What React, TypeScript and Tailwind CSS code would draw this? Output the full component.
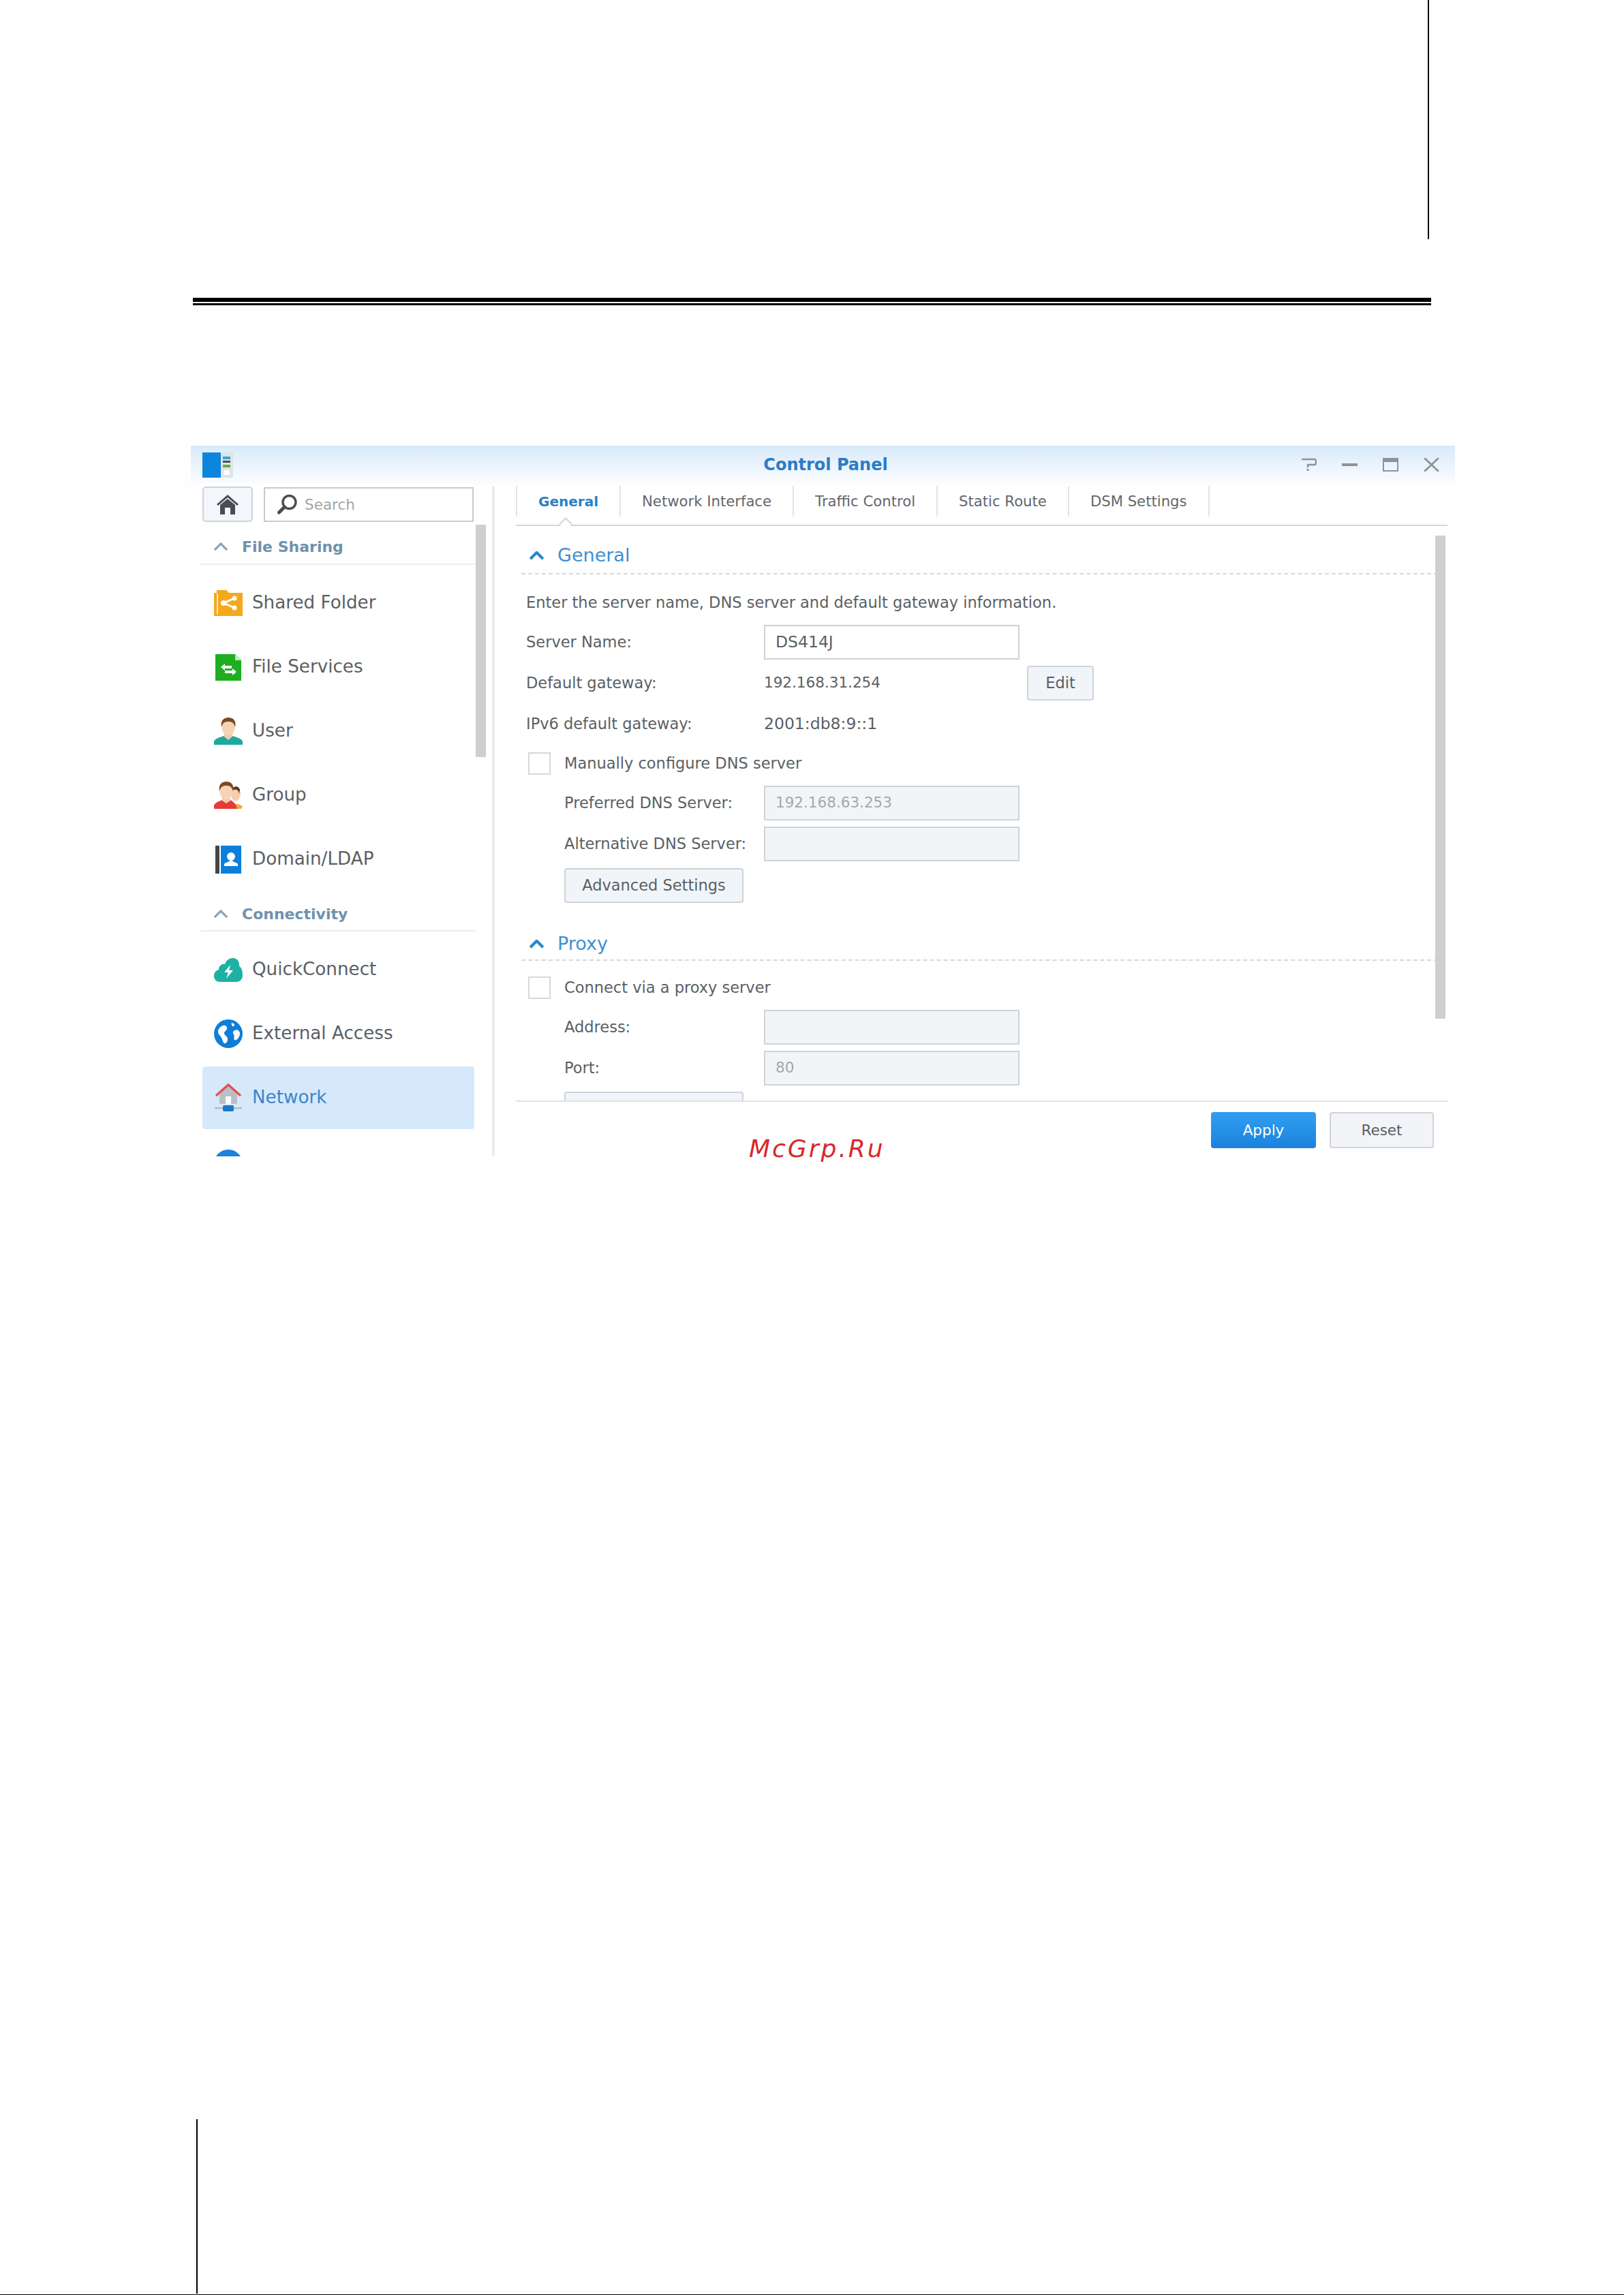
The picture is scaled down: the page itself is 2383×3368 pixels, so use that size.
import React from "react";

const F = "[font-family:'DejaVu_Sans',Verdana,sans-serif]";

function Chevron({ className = "", w = 3.4 }: { className?: string; w?: number }) {
  return (
    <svg viewBox="0 0 24 14" className={className} fill="none" stroke="currentColor" strokeWidth={w}>
      <path d="M2 12 L12 2 L22 12" />
    </svg>
  );
}

function FolderIcon() {
  return (
    <svg viewBox="0 0 42 38" className="w-[42px] h-[38px]">
      <path d="M0 4 H4 V0 H18 L22 4 H42 V38 H0 Z" fill="#f6a81c" />
      <rect x="4" y="5" width="2" height="30" fill="#fff" opacity="0.7" />
      <path d="M14 19 L30 12 M14 19 L30 26" stroke="#fff" strokeWidth="3" />
      <circle cx="14" cy="19" r="4" fill="#fff" />
      <circle cx="30" cy="12" r="3.5" fill="#fff" />
      <circle cx="30" cy="26" r="3.5" fill="#fff" />
    </svg>
  );
}
function FileIcon() {
  return (
    <svg viewBox="0 0 38 39" className="w-[38px] h-[39px]">
      <path d="M0 0 H29 L38 9 V39 H0 Z" fill="#1fae1f" />
      <path d="M29 0 V9 H38 Z" fill="#bfe8bf" />
      <path d="M8 19 L14 14 V17 H24 V21 H14 V24 Z" fill="#fff" />
      <path d="M31 26 L25 21 V24 H14 V28 H25 V31 Z" fill="#fff" />
    </svg>
  );
}
function UserIcon() {
  return (
    <svg viewBox="0 0 42 40" className="w-[42px] h-[40px]">
      <path d="M0 40 V35 C2 30 10 29 14 27 L21 32 L28 27 C32 29 40 30 42 35 V40 Z" fill="#1fa8a0" />
      <path d="M15 22 H27 V28 L21 33 L15 28 Z" fill="#f3cba8" />
      <ellipse cx="21" cy="13" rx="10" ry="13" fill="#f6d3b4" />
      <path d="M11 14 C9 3 16 0 21 0 C27 0 33 3 31 14 C29 8 27 6 21 6 C15 6 13 8 11 14 Z" fill="#7a4a2a" />
    </svg>
  );
}
function GroupIcon() {
  return (
    <svg viewBox="0 0 42 40" className="w-[42px] h-[40px]">
      <path d="M22 38 C26 30 34 32 42 36 L40 40 H22 Z" fill="#f0a83c" />
      <ellipse cx="32" cy="18" rx="7" ry="11" fill="#f3cfae" />
      <path d="M26 14 C26 7 36 4 38 12 L37 18 C36 12 33 11 29 12 Z" fill="#5a3a22" />
      <path d="M0 40 V35 C2 30 8 29 12 27 L18 31 L24 27 C28 29 32 32 34 40 Z" fill="#e63a3a" />
      <path d="M12 20 H24 V28 L18 32 L12 28 Z" fill="#f3cba8" />
      <ellipse cx="18" cy="13" rx="10" ry="13" fill="#f6d3b4" />
      <path d="M8 14 C6 3 13 0 18 0 C24 0 30 3 28 14 C26 8 24 6 18 6 C12 6 10 8 8 14 Z" fill="#7a4a2a" />
    </svg>
  );
}
function DomainIcon() {
  return (
    <svg viewBox="0 0 38 41" className="w-[38px] h-[41px]">
      <rect x="0" y="0" width="6" height="41" fill="#444" />
      <rect x="8" y="0" width="30" height="41" fill="#0b7fdc" />
      <circle cx="23" cy="16" r="6" fill="#fff" />
      <path d="M13 30 V27 C15 24 19 25 21 22 H25 C27 25 31 24 33 27 V30 Z" fill="#fff" />
    </svg>
  );
}
function CloudIcon() {
  return (
    <svg viewBox="0 0 42 35" className="w-[42px] h-[35px]">
      <path d="M9 35 C2 35 0 30 0 26 C0 21 3 18 7 17 C7 11 12 8 16 9 C18 2 24 0 28 0 C34 0 38 5 37 12 C41 14 42 20 42 25 C42 31 38 35 33 35 Z" fill="#1fb0a4" />
      <path d="M24 10 L15 21 H21 L18 30 L28 18 H22 Z" fill="#fff" />
    </svg>
  );
}
function GlobeIcon() {
  return (
    <svg viewBox="0 0 42 42" className="w-[42px] h-[42px]">
      <circle cx="21" cy="21" r="21" fill="#0f7ed8" />
      <path d="M7 14 C12 7 18 8 19 12 C20 16 15 17 15 20 C15 24 20 24 20 29 C20 34 16 37 14 34 C12 31 12 27 9 24 C6 21 5 17 7 14 Z" fill="#fff" />
      <path d="M26 5 C30 6 31 8 29 10 C27 11 25 8 26 5 Z" fill="#fff" />
      <path d="M29 17 C33 14 38 16 38 21 C38 26 33 32 30 30 C28 27 31 25 29 22 C28 20 27 19 29 17 Z" fill="#fff" />
    </svg>
  );
}
function NetIcon() {
  return (
    <svg viewBox="0 0 42 42" className="w-[42px] h-[42px]">
      <path d="M8 16 L21 4 L34 16 V30 H8 Z" fill="#b9bfc7" />
      <rect x="17" y="19" width="8" height="11" fill="#fff" />
      <path d="M3 18 L21 2 L39 18" fill="none" stroke="#e8504e" strokeWidth="3.5" />
      <rect x="1" y="35" width="40" height="2.5" fill="#b4bac2" />
      <rect x="13" y="32" width="16" height="9" rx="2" fill="#1e78c8" />
    </svg>
  );
}
function AppIcon() {
  return (
    <svg viewBox="0 0 45 37" className="w-[45px] h-[37px]">
      <rect x="0" y="0" width="27" height="37" fill="#0c85dc" />
      <rect x="27" y="0" width="18" height="37" fill="#dfe4e8" />
      <rect x="30" y="6" width="11" height="4" fill="#3aa0c8" />
      <rect x="30" y="12" width="11" height="3" fill="#444f58" />
      <rect x="30" y="18" width="11" height="4" fill="#6ab02c" />
      <rect x="31" y="26" width="9" height="7" rx="2" fill="#fff" />
    </svg>
  );
}

function Item({ icon, label }: { icon: React.ReactNode; label: string }) {
  return (
    <div className="flex items-center h-[94px] shrink-0 w-[399px]">
      <div className="w-[73px] pl-[17px] flex justify-start shrink-0">{icon}</div>
      <span className="text-[26.2px] text-[#5b5f63] whitespace-nowrap">{label}</span>
    </div>
  );
}

function Heading({ label, h }: { label: string; h: string }) {
  return (
    <div className={`flex items-center ${h} shrink-0 ml-[-3px] w-[404px] border-b-[2px] border-[#eeeeee] pl-[19px]`}>
      <Chevron className="w-[22px] h-[13px] text-[#8aa2b4] mr-[20px]" />
      <span className="text-[22px] font-bold text-[#6f92ad] whitespace-nowrap">{label}</span>
    </div>
  );
}

function Row({ label, value, small, indent, children, h }: { label: string; value?: string; small?: boolean; indent?: boolean; children?: React.ReactNode; h: string }) {
  return (
    <div className={`flex items-center ${h}`}>
      <div className={`shrink-0 ${indent ? "w-[349px] pl-[56px]" : "w-[349px]"}`}>
        <span className="text-[22.5px] text-[#5b5f63] whitespace-nowrap">{label}</span>
      </div>
      {value && <div className={`w-[386px] shrink-0 text-[#5b5f63] whitespace-nowrap ${small ? "text-[21.5px]" : "text-[23.5px]"}`}>{value}</div>}
      {children}
    </div>
  );
}

function Field({ value, disabled }: { value?: string; disabled?: boolean }) {
  return (
    <div className={`w-[375px] h-[51px] border-[2px] flex items-center pl-[15px] ${disabled ? "text-[21.5px] bg-[#f2f5f8] border-[#cfd3d7] text-[#a4a8ac]" : "text-[23.5px] bg-white border-[#cfd1d3] text-[#5b5f63]"}`}>
      {value}
    </div>
  );
}

function Check({ label }: { label: string }) {
  return (
    <div className="flex items-center h-[33px] ml-[3px]">
      <div className="w-[33px] h-[33px] bg-white border-[2px] border-[#d6d8da]" />
      <span className="ml-[20px] text-[22.5px] text-[#5b5f63] whitespace-nowrap">{label}</span>
    </div>
  );
}

function Section({ title }: { title: string }) {
  return (
    <div className="flex items-center h-[34px] pl-[4px]">
      <Chevron w={4.6} className="w-[23px] h-[13px] text-[#2d86c8] mr-[19px]" />
      <span className="text-[27px] text-[#3f8fd0] whitespace-nowrap">{title}</span>
    </div>
  );
}

const Tab = ({ label, active }: { label: string; active?: boolean }) => (
  <div className={`flex items-center h-[45px] px-[31px] border-r-[2px] border-[#e2e4e6] whitespace-nowrap ${active ? "text-[20px] font-bold text-[#2a7fc4]" : "text-[21.2px] text-[#63676b]"}`}>
    {label}
  </div>
);

export default function App() {
  return (
    <div className={`relative w-[2383px] h-[3368px] overflow-hidden bg-[#fefefe] ${F}`}>
      <div className="ml-[2095px] w-[2px] h-[351px] bg-black" />
      <div className="ml-[283px] mt-[86px] w-[1817px] h-[6px] bg-black" />
      <div className="ml-[283px] mt-[2px] w-[1817px] h-[3px] bg-black" />

      {/* window */}
      <div className="ml-[280px] mt-[206px] w-[1855px] h-[1043px] bg-white flex flex-col relative">
        <div className="h-[56px] shrink-0 bg-gradient-to-b from-[#d8eafa] to-[#fbfdff] flex items-center pl-[17px] pr-[23px] relative">
          <AppIcon />
          <div className="flex-1 text-center text-[24px] font-bold text-[#2b7cc6] pl-[171px]">Control Panel</div>
          <svg viewBox="0 0 22 20" className="w-[22px] h-[20px] mr-[37px]" fill="none" stroke="#8d9399" strokeWidth="2.6">
            <path d="M0 2 H19 C22 2 22 10 19 10 H9 V14" />
            <rect x="7.5" y="16" width="3" height="3" fill="#8d9399" stroke="none" />
          </svg>
          <div className="w-[23px] h-[4px] bg-[#8d9399] mr-[37px]" />
          <div className="w-[23px] h-[20px] border-[2px] border-t-[6px] border-[#8d9399] mr-[37px]" />
          <svg viewBox="0 0 23 20" className="w-[23px] h-[20px]" fill="none" stroke="#8d9399" strokeWidth="2.8">
            <path d="M1 0 L22 20 M22 0 L1 20" />
          </svg>
        </div>

        <div className="flex flex-1 min-h-0">
          {/* sidebar */}
          <div className="w-[442px] shrink-0 pl-[17px] flex flex-col overflow-hidden relative">
            <div className="flex items-center mt-[4px] h-[52px] shrink-0">
              <div className="w-[74px] h-[52px] rounded-[5px] border-[2px] border-[#cdd3da] bg-[#f3f6fa] flex items-center justify-center">
                <svg viewBox="0 0 32 29" className="w-[32px] h-[29px]">
                  <path d="M16 0 L32 14 L30 16 L16 4 L2 16 L0 14 Z" fill="#494d51" />
                  <path d="M5 15 L16 6 L27 15 V29 H20 V19 H12 V29 H5 Z" fill="#494d51" />
                </svg>
              </div>
              <div className="ml-[16px] w-[308px] h-[51px] border-[2px] border-[#c9cbcd] bg-white flex items-center pl-[17px]">
                <svg viewBox="0 0 30 30" className="w-[31px] h-[30px]" fill="none" stroke="#4a4e52">
                  <circle cx="18" cy="12" r="9.5" strokeWidth="3.4" />
                  <path d="M11 19 L3 27" strokeWidth="5" strokeLinecap="round" />
                </svg>
                <span className="ml-[10px] pt-[2px] text-[21.5px] text-[#a3a6a9]">Search</span>
              </div>
            </div>
            <Heading label="File Sharing" h="h-[63px] pt-[11px]" />
            <div className="h-[9px] shrink-0" />
            <Item icon={<FolderIcon />} label="Shared Folder" />
            <Item icon={<div className="pl-[2px]"><FileIcon /></div>} label="File Services" />
            <Item icon={<UserIcon />} label="User" />
            <Item icon={<GroupIcon />} label="Group" />
            <Item icon={<div className="pl-[2px]"><DomainIcon /></div>} label="Domain/LDAP" />
            <Heading label="Connectivity" h="h-[59px] pt-[9px]" />
            <div className="h-[9px] shrink-0" />
            <Item icon={<CloudIcon />} label="QuickConnect" />
            <Item icon={<GlobeIcon />} label="External Access" />
            <div className="w-[399px] h-[92px] mt-[1px] rounded-[4px] bg-[#d6e9fa] flex items-center shrink-0">
              <div className="w-[73px] pl-[17px] shrink-0"><NetIcon /></div>
              <span className="text-[26.2px] text-[#3f83cc]">Network</span>
            </div>
            <div className="ml-[17px] mt-[30px] w-[42px] h-[42px] rounded-full bg-[#1a82dc] shrink-0" />
            {/* sidebar scrollbar */}
            <div className="absolute left-[418px] top-[60px] w-[15px] h-[341px] bg-[#cfcfcf]" />
          </div>
          <div className="w-[4px] mt-[4px] shrink-0 bg-[#ebebeb]" />

          {/* main */}
          <div className="flex-1 min-w-0 pl-[31px] flex flex-col relative">
            <div className="flex mt-[3px] border-l-[2px] border-[#e2e4e6] h-[45px] w-fit shrink-0">
              <Tab label="General" active />
              <Tab label="Network Interface" />
              <Tab label="Traffic Control" />
              <Tab label="Static Route" />
              <Tab label="DSM Settings" />
            </div>
            <div className="mt-[12px] w-[1367px] h-[2px] bg-[#d2d4d6] shrink-0 relative">
              <div className="absolute left-[66px] top-[-8px] w-[14px] h-[14px] rotate-45 bg-white border-l-[2px] border-t-[2px] border-[#d2d4d6]" />
            </div>

            <div className="flex-1 min-h-0 overflow-hidden pl-[15px] relative">
              <div className="pt-[26px]"><Section title="General" /></div>
              <div className="ml-[-7px] mt-[9px] w-[1355px] border-t-[2px] border-dashed border-[#d8d8d8]" />
              <div className="mt-[28px] text-[22.5px] text-[#5b5f63] whitespace-nowrap leading-[26px]">Enter the server name, DNS server and default gateway information.</div>
              <div className="mt-[20px]">
                <Row label="Server Name:" h="h-[51px]"><Field value="DS414J" /></Row>
                <Row label="Default gateway:" value="192.168.31.254" small h="h-[51px] mt-[9px]">
                  <div className="w-[98px] h-[51px] rounded-[4px] border-[2px] border-[#cdd3da] bg-[#f1f5f9] flex items-center justify-center text-[22.5px] text-[#5b5f63]">Edit</div>
                </Row>
                <Row label="IPv6 default gateway:" value="2001:db8:9::1" h="h-[51px] mt-[9px]" />
              </div>
              <div className="mt-[16px]"><Check label="Manually configure DNS server" /></div>
              <div className="mt-[16px]">
                <Row indent label="Preferred DNS Server:" h="h-[51px]"><Field value="192.168.63.253" disabled /></Row>
                <Row indent label="Alternative DNS Server:" h="h-[51px] mt-[9px]"><Field disabled /></Row>
              </div>
              <div className="ml-[56px] mt-[10px] w-[263px] h-[51px] rounded-[4px] border-[2px] border-[#cdd3da] bg-[#f1f5f9] flex items-center justify-center text-[22.5px] text-[#5b5f63]">Advanced Settings</div>
              <div className="mt-[43px]"><Section title="Proxy" /></div>
              <div className="ml-[-7px] mt-[6px] w-[1355px] border-t-[2px] border-dashed border-[#d8d8d8]" />
              <div className="mt-[23px]"><Check label="Connect via a proxy server" /></div>
              <div className="mt-[16px]">
                <Row indent label="Address:" h="h-[51px]"><Field disabled /></Row>
                <Row indent label="Port:" h="h-[51px] mt-[9px]"><Field value="80" disabled /></Row>
              </div>
              <div className="ml-[56px] mt-[9px] w-[263px] h-[51px] rounded-[4px] border-[2px] border-[#cdd3da] bg-[#f1f5f9]" />
              {/* main scrollbar */}
              <div className="absolute left-[1349px] top-[14px] w-[15px] h-[709px] bg-[#cfcfcf]" />
            </div>

            <div className="w-[1367px] h-[2px] bg-[#e2e2e2] shrink-0" />
            <div className="h-[80px] shrink-0 flex justify-end w-[1347px] pt-[15px] gap-[20px]">
              <div className="w-[154px] h-[53px] pt-[2px] rounded-[4px] bg-gradient-to-b from-[#2f9ff2] to-[#1c82dc] flex items-center justify-center text-[21.5px] text-white">Apply</div>
              <div className="w-[153px] h-[53px] pt-[2px] rounded-[4px] border-[2px] border-[#d0d4d9] bg-[#f2f4f8] flex items-center justify-center text-[21.5px] text-[#5b5f63]">Reset</div>
            </div>
          </div>
        </div>

        <div className="absolute left-[819px] top-[1009px] text-[36px] italic tracking-[3px] text-[#d8282c] leading-[46px] whitespace-nowrap">McGrp.Ru</div>
      </div>

      <div className="ml-[288px] mt-[1413px] w-[2px] h-[256px] bg-black" />
      <div className="mt-[1px] w-full h-[1px] bg-black" />
    </div>
  );
}
